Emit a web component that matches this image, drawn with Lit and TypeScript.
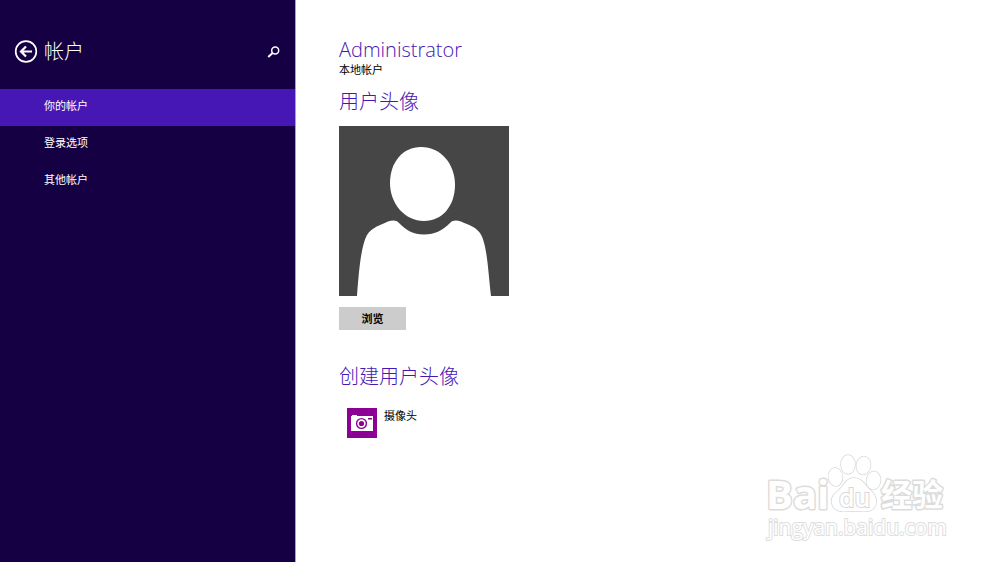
import { LitElement, html, svg, css } from "lit";
import { customElement, property, state } from "lit/decorators.js";

const SECTIONS = ["你的帐户", "登录选项", "其他帐户"];

@customElement("settings-nav")
class SettingsNav extends LitElement {
  @state() private current = 0;

  static styles = css`
    :host {
      display: block;
      background: #140043;
      color: #fff;
      border-right: 1px solid #a99fc8;
    }
    .head {
      display: flex;
      align-items: center;
      gap: 6px;
      padding: 37px 15px 22px 14px;
      height: 30px;
    }
    .icon-button {
      display: flex;
      padding: 0;
      border: 0;
      background: none;
      color: inherit;
      cursor: pointer;
    }
    .title {
      flex: 1;
      margin: 0;
      font-size: 20px;
      line-height: 30px;
      font-weight: 300;
    }
    .list {
      margin: 0;
      padding: 0;
      list-style: none;
    }
    .link {
      display: block;
      padding: 7px 44px 10px;
      font-size: 11px;
      line-height: 20px;
      color: inherit;
      text-decoration: none;
    }
    .link[aria-current="page"] {
      background: #4617b4;
    }
  `;

  render() {
    return html`
      <header class="head">
        <button class="icon-button" aria-label="返回">
          <svg width="24" height="24" viewBox="0 0 24 24" fill="none" stroke="currentColor">
            <circle cx="12" cy="11.5" r="10.3" stroke-width="1.7" />
            <path d="M18 11.5H7.5M12 6.5L7 11.5l5 5" stroke-width="2.2" />
          </svg>
        </button>
        <h1 class="title">帐户</h1>
        <button class="icon-button" aria-label="搜索">
          <svg width="13" height="13" viewBox="0 0 13 13" fill="none" stroke="currentColor">
            <circle cx="8.2" cy="4.4" r="3.5" stroke-width="1.5" />
            <path d="M5.6 7L1.2 10.9" stroke-width="2" />
          </svg>
        </button>
      </header>
      <nav>
        <ul class="list">
          ${SECTIONS.map(
            (name, i) => html`<li>
              <a class="link" href="#" aria-current=${i === this.current ? "page" : "false"}
                @click=${(e: Event) => { e.preventDefault(); this.current = i; }}>${name}</a>
            </li>`
          )}
        </ul>
      </nav>
    `;
  }
}

@customElement("site-watermark")
class SiteWatermark extends LitElement {
  static styles = css`
    :host {
      display: block;
    }
    .mark {
      display: block;
      overflow: visible;
    }
    .outline {
      fill: #fff;
      stroke: #d8d8d8;
      stroke-width: 1.5;
      paint-order: stroke;
    }
    .thick {
      stroke: #dcdcdc;
      stroke-width: 3;
      stroke-linejoin: round;
    }
    .brand {
      font: 700 40px "Open Sans", sans-serif;
    }
    .du {
      font: 600 25px "Open Sans", sans-serif;
      stroke-width: 2;
    }
    .cjk {
      font: 700 31px "Noto Sans CJK SC", sans-serif;
    }
    .url {
      font: 400 21px "Open Sans", sans-serif;
      stroke: #dedede;
      stroke-width: 2;
    }
  `;

  render() {
    return html`
      <svg class="mark" width="185" height="92" viewBox="0 0 185 92">
        ${svg`
          <text class="outline thick brand" x="-1" y="59">Bai</text>
          <g class="outline">
            <ellipse cx="68.5" cy="27" rx="7" ry="9" transform="rotate(-8 68.5 27)" />
            <ellipse cx="81" cy="14.5" rx="7" ry="9.5" />
            <ellipse cx="96.5" cy="15.5" rx="7" ry="9" transform="rotate(10 96.5 15.5)" />
            <ellipse cx="106.5" cy="30.5" rx="7" ry="9" transform="rotate(8 106.5 30.5)" />
            <path d="M87 28C95 28 98 35 103 40C110 46 111 53 107 58C102 63 95 61 87 61C79 61 72 63 67 58C63 52 64 46 71 41C77 36 79 28 87 28Z" />
          </g>
          <text class="outline du" x="72" y="57">du</text>
          <text class="outline thick cjk" x="114" y="56">经验</text>
          <text class="outline url" x="1" y="85">jingyan.baidu.com</text>
        `}
      </svg>
    `;
  }
}

@customElement("app-root")
class AppRoot extends LitElement {
  @property() account = "Administrator";

  static styles = css`
    :host {
      position: relative;
      display: grid;
      grid-template-columns: minmax(200px, 29.6%) 1fr;
      min-height: 100vh;
      overflow: hidden;
      background: #fff;
      color: #000;
      font-family: "Open Sans", "Noto Sans CJK SC", sans-serif;
      font-size: 11px;
      line-height: 16px;
    }
    .content {
      padding: 37px 43px;
    }
    .heading {
      margin: 0;
      font-size: 20px;
      line-height: 26px;
      font-weight: 300;
      color: #4617b4;
    }
    .kind {
      margin: 0 0 12px;
      line-height: 14px;
    }
    .avatar {
      display: block;
      margin: 11px 0;
    }
    .browse {
      display: block;
      width: 67px;
      height: 23px;
      margin: 0 0 34px;
      padding: 0;
      border: 0;
      background: #ccc;
      color: #000;
      font: inherit;
      font-weight: 700;
      cursor: pointer;
    }
    .camera {
      display: flex;
      align-items: flex-start;
      gap: 7px;
      margin: 18px 0 0 8px;
      padding: 0;
      border: 0;
      background: none;
      color: inherit;
      font: inherit;
      cursor: pointer;
    }
    .watermark {
      position: absolute;
      right: 48px;
      bottom: 20px;
      pointer-events: none;
    }
  `;

  render() {
    return html`
      <settings-nav></settings-nav>
      <main class="content">
        <h2 class="heading">${this.account}</h2>
        <p class="kind">本地帐户</p>
        <h2 class="heading">用户头像</h2>
        <svg class="avatar" width="170" height="170" viewBox="0 0 170 170" role="img" aria-label="用户头像">
          <rect width="170" height="170" fill="#464646" />
          <path fill="#fff" d="M82 21C102 21 116 38 116 59C116 80 103 95 85 95C66 95 51 78 51 57C51 36 64 21 82 21Z" />
          <path fill="#fff" d="M18 170C20 144 22 120 28 109C33 101 42 99 49 95.5C54 94 57 94 60 97C67 104 74 108.5 85 108.5C96 108.5 104 104 111 97C114 94 117 94 122 95.5C129 99 136 100 141 107C148 117 149 144 152 170Z" />
        </svg>
        <button class="browse">浏览</button>
        <h2 class="heading">创建用户头像</h2>
        <button class="camera">
          <svg width="30" height="30" viewBox="0 0 30 30" aria-hidden="true">
            <rect width="30" height="30" fill="#8c0095" />
            <path fill="#fff" d="M4 8h1V7h5v1h16v15H4z" />
            <rect x="21" y="10" width="4" height="1.5" fill="#8c0095" />
            <circle cx="14.5" cy="15.5" r="4.9" fill="none" stroke="#8c0095" stroke-width="1.4" />
            <circle cx="14.5" cy="15.5" r="2.6" fill="#8c0095" />
          </svg>
          <span>摄像头</span>
        </button>
      </main>
      <site-watermark class="watermark" aria-hidden="true"></site-watermark>
    `;
  }
}
